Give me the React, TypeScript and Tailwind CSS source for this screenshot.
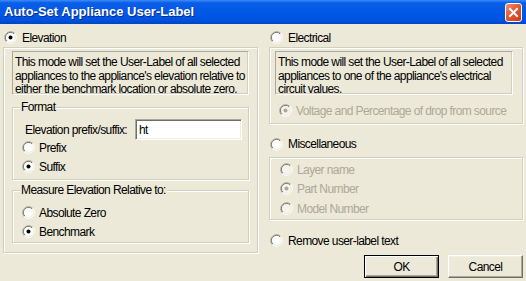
import type { ReactNode } from 'react';

type RadioProps = {
  checked?: boolean;
  disabled?: boolean;
};

function Radio({ checked, disabled }: RadioProps) {
  return (
    <svg width="13" height="13" viewBox="0 0 13 13" className="shrink-0" aria-hidden>
      <path d="M2.26 10.74A6 6 0 0 1 10.74 2.26" stroke="#aca899" fill="none" />
      <path d="M10.74 2.26A6 6 0 0 1 2.26 10.74" stroke="#ffffff" fill="none" />
      <path d="M2.96 10.04A5 5 0 0 1 10.04 2.96" stroke="#716f64" fill="none" />
      <path d="M10.04 2.96A5 5 0 0 1 2.96 10.04" stroke="#f1efe2" fill="none" />
      <circle cx="6.5" cy="6.5" r="4.5" fill={disabled ? '#f4f3ec' : '#ffffff'} />
      {checked && <circle cx="6.5" cy="6.5" r="2" fill={disabled ? '#aca899' : '#000000'} />}
    </svg>
  );
}

function RadioRow({
  label,
  checked,
  disabled,
  className = '',
}: RadioProps & { label: string; className?: string }) {
  return (
    <div className={`flex h-[15px] items-center gap-[4px] ${className}`}>
      <Radio checked={checked} disabled={disabled} />
      <span className={disabled ? 'text-[#aca899]' : 'text-black'}>{label}</span>
    </div>
  );
}

function GroupBox({
  legend,
  className = '',
  children,
}: {
  legend: string;
  className?: string;
  children: ReactNode;
}) {
  return (
    <div
      className={`relative border border-[#d0d0bf] shadow-[inset_1px_1px_0_#fff,1px_1px_0_#fff] ${className}`}
    >
      <span className="absolute -top-[8px] left-[7px] bg-[#ece9d8] px-[1px] leading-[14px]">
        {legend}
      </span>
      {children}
    </div>
  );
}

function Etched({ className = '', children }: { className?: string; children?: ReactNode }) {
  return (
    <div
      className={`border border-[#d0d0bf] shadow-[inset_1px_1px_0_#fff,1px_1px_0_#fff] ${className}`}
    >
      {children}
    </div>
  );
}

function Description({ children, className = '' }: { children: ReactNode; className?: string }) {
  return (
    <div
      className={`h-[44px] border border-t-[#aca899] border-l-[#aca899] border-r-white border-b-white shadow-[inset_-1px_-1px_0_#d0d0bf] pl-[2px] pt-[4px] leading-[13.5px] ${className}`}
    >
      {children}
    </div>
  );
}

export default function App() {
  return (
    <div className="h-[281px] w-[526px] overflow-hidden bg-[#ece9d8] font-['Liberation_Sans',Arial,sans-serif] text-[12px] tracking-[-0.6px] text-black">
      {/* title bar */}
      <div className="flex h-[24px] items-center justify-between bg-[linear-gradient(180deg,#3d8cf5_0%,#0a5de8_12%,#0058e6_55%,#0052de_85%,#0044c4_100%)] pl-[4px] pr-[4px]">
        <span className="text-[13px] font-bold tracking-normal text-white [text-shadow:1px_1px_0_#0a2a8a]">
          Auto-Set Appliance User-Label
        </span>
        <div className="flex h-[19px] w-[17px] items-center justify-center rounded-[3px] border border-white bg-[linear-gradient(135deg,#f09477_0%,#e35a34_45%,#c93a16_100%)]">
          <svg width="11" height="11" viewBox="0 0 11 11" aria-hidden>
            <path d="M2 2 9 9M9 2 2 9" stroke="#fff" strokeWidth="2" strokeLinecap="square" />
          </svg>
        </div>
      </div>

      <div className="flex pl-[3px]">
        {/* left column */}
        <div className="flex w-[255px] flex-col">
          <div className="flex h-[23px] items-center gap-[5px] pl-[1px] pt-[4px]">
            <Radio checked />
            <span>Elevation</span>
          </div>
          <Etched className="h-[206px] pl-[8px] pt-[3px]">
            <Description className="w-[237px]">
              This mode will set the User-Label of all selected
              <br />
              appliances to the appliance's elevation relative to
              <br />
              either the benchmark location or absolute zero.
            </Description>

            <GroupBox legend="Format" className="mt-[12px] h-[73px] w-[237px]">
              <div className="mt-[11px] flex items-center">
                <span className="ml-[12px] w-[110px]">Elevation prefix/suffix:</span>
                <div className="flex h-[21px] w-[107px] items-center border border-t-[#aca899] border-l-[#aca899] border-r-white border-b-white bg-white pl-[3px] shadow-[inset_1px_1px_0_#716f64,inset_-1px_-1px_0_#f1efe2]">
                  ht
                </div>
              </div>
              <RadioRow label="Prefix" className="ml-[9px]" />
              <RadioRow label="Suffix" checked className="ml-[9px] mt-[4px]" />
            </GroupBox>

            <GroupBox legend="Measure Elevation Relative to:" className="mt-[10px] h-[53px] w-[237px]">
              <RadioRow label="Absolute Zero" className="ml-[9px] mt-[14px]" />
              <RadioRow label="Benchmark" checked className="ml-[9px] mt-[4px]" />
            </GroupBox>
          </Etched>
        </div>

        {/* right column */}
        <div className="ml-[11px] flex w-[254px] flex-col">
          <div className="flex h-[23px] items-center gap-[5px] pl-[1px] pt-[4px]">
            <Radio />
            <span>Electrical</span>
          </div>
          <Etched className="h-[77px] pl-[5px] pt-[3px]">
            <Description className="w-[238px]">
              This mode will set the User-Label of all selected
              <br />
              appliances to one of the appliance's electrical
              <br />
              circuit values.
            </Description>
            <RadioRow
              label="Voltage and Percentage of drop from source"
              checked
              disabled
              className="ml-[4px] mt-[8px]"
            />
          </Etched>

          <div className="mt-[12px] flex h-[16px] items-center gap-[5px] pl-[1px]">
            <Radio />
            <span>Miscellaneous</span>
          </div>
          <Etched className="mt-[5px] h-[63px] pl-[10px]">
            <RadioRow label="Layer name" disabled className="mt-[4px]" />
            <RadioRow label="Part Number" checked disabled className="mt-[4px]" />
            <RadioRow label="Model Number" disabled className="mt-[5px]" />
          </Etched>

          <div className="mt-[13px] flex h-[15px] items-center gap-[5px] pl-[1px]">
            <Radio />
            <span>Remove user-label text</span>
          </div>

          <div className="mt-[7px] flex justify-end gap-[9px]">
            <button
              type="button"
              className="flex h-[23px] w-[75px] items-center justify-center border border-black bg-[#ece9d8] shadow-[inset_1px_1px_0_#fff,inset_-1px_-1px_0_#716f64,inset_-2px_-2px_0_#aca899]"
            >
              OK
            </button>
            <button
              type="button"
              className="flex h-[23px] w-[75px] items-center justify-center border border-t-white border-l-white border-r-[#716f64] border-b-[#716f64] bg-[#ece9d8] shadow-[inset_-1px_-1px_0_#aca899,inset_1px_1px_0_#f1efe2]"
            >
              Cancel
            </button>
          </div>
        </div>
      </div>
    </div>
  );
}
